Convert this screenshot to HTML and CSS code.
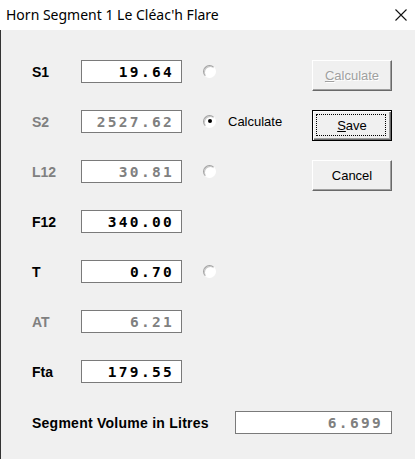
FILE: index.html
```html
<!DOCTYPE html>
<html>
<head>
<meta charset="utf-8">
<link rel="stylesheet" href="styles.css">
</head>
<body>
<div class="window">
  <div class="titlebar">
    <span class="title">Horn Segment 1 Le Cléac'h Flare</span>
    <svg class="close" width="12" height="12" viewBox="0 0 12 12"><path d="M0.5 0.5 L11.5 11.5 M11.5 0.5 L0.5 11.5" stroke="#111" stroke-width="1.1" fill="none"/></svg>
  </div>
  <div class="client">
    <div class="fields">
      <div class="row"><span class="lbl">S1</span><span class="box">19.64</span><span class="radio"></span></div>
      <div class="row"><span class="lbl dis">S2</span><span class="box dis">2527.62</span><span class="radio on"></span><span class="rlabel">Calculate</span></div>
      <div class="row"><span class="lbl dis">L12</span><span class="box dis">30.81</span><span class="radio"></span></div>
      <div class="row"><span class="lbl">F12</span><span class="box">340.00</span></div>
      <div class="row"><span class="lbl">T</span><span class="box">0.70</span><span class="radio"></span></div>
      <div class="row"><span class="lbl dis">AT</span><span class="box dis">6.21</span></div>
      <div class="row"><span class="lbl">Fta</span><span class="box">179.55</span></div>
      <div class="row vol"><span class="lbl wide">Segment Volume in Litres</span><span class="box volbox dis">6.699</span></div>
    </div>
    <div class="buttons">
      <div class="btn disabled"><span><u>C</u>alculate</span></div>
      <div class="btn default"><span><u>S</u>ave</span></div>
      <div class="btn"><span>Cancel</span></div>
    </div>
  </div>
</div>
</body>
</html>
```
FILE: styles.css
```css
html, body {
  margin: 0;
  padding: 0;
  background: #f0f0f0;
}
.window {
  width: 415px;
  height: 459px;
  display: flex;
  flex-direction: column;
  overflow: hidden;
}
.titlebar {
  height: 30px;
  background: #ffffff;
  display: flex;
  align-items: center;
  justify-content: space-between;
  padding: 0 8px 0 6px;
  box-sizing: border-box;
  flex: none;
}
.title {
  font-family: "Noto Sans", sans-serif;
  font-size: 14px;
  color: #000;
  line-height: 1;
  margin-top: -1px;
}
.close {
  display: block;
}
.client {
  flex: 1;
  display: flex;
  border-left: 1px solid #333333;
  padding: 30px 0 0 31px;
  box-sizing: border-box;
}
.fields {
  width: 280px;
  flex: none;
  display: flex;
  flex-direction: column;
  align-items: flex-start;
  gap: 27px;
}
.row {
  height: 23px;
  display: flex;
  align-items: center;
  flex: none;
}
.lbl {
  width: 49px;
  flex: none;
  white-space: nowrap;
  font-family: "Liberation Sans", Arial, sans-serif;
  font-weight: bold;
  font-size: 14px;
  color: #000;
}
.lbl.dis {
  color: #808080;
}
.lbl.wide {
  width: 203px;
  letter-spacing: 0.25px;
}
.box {
  box-sizing: border-box;
  flex: none;
  width: 101px;
  height: 23px;
  background: #ffffff;
  border: 1px solid #7a7a7a;
  display: flex;
  align-items: center;
  justify-content: flex-end;
  padding-right: 7px;
  font-family: "DejaVu Sans Mono", monospace;
  font-weight: bold;
  font-size: 14.5px;
  letter-spacing: 2.3px;
  color: #000;
}
.box.dis {
  color: #808080;
}
.volbox {
  width: 157px;
  padding-right: 8px;
}
.vol {
  margin-top: 1px;
  width: 360px;
}
.radio {
  box-sizing: border-box;
  flex: none;
  width: 13px;
  height: 13px;
  margin-left: 21px;
  border-radius: 50%;
  border: 1px solid;
  border-color: #a0a0a0 #ffffff #ffffff #a0a0a0;
  background: #ffffff;
  box-shadow: inset 1px 1px 0 #c8c8c8;
  display: flex;
  align-items: center;
  justify-content: center;
  margin-top: -1px;
}
.radio.on::after {
  content: "";
  width: 4px;
  height: 4px;
  border-radius: 50%;
  background: #000;
}
.rlabel {
  margin-left: 12px;
  font-family: "Liberation Sans", Arial, sans-serif;
  font-size: 13px;
  color: #000;
}
.buttons {
  display: flex;
  flex-direction: column;
  gap: 19px;
}
.btn {
  position: relative;
  box-sizing: border-box;
  width: 80px;
  height: 31px;
  background: #f0f0f0;
  border: 1px solid;
  border-color: #ffffff #696969 #696969 #ffffff;
  box-shadow: inset -1px -1px 0 #a0a0a0;
  display: flex;
  align-items: center;
  justify-content: center;
  font-family: "Liberation Sans", Arial, sans-serif;
  font-size: 13px;
  color: #000;
}
.btn.disabled {
  color: #a0a0a0;
  text-shadow: 1px 1px 0 #ffffff;
}
.btn.default {
  border-color: #000000;
  box-shadow: inset 1px 1px 0 #ffffff, inset -1px -1px 0 #696969, inset -2px -2px 0 #a0a0a0;
}
.btn.default::after {
  content: "";
  position: absolute;
  left: 3px;
  top: 3px;
  right: 5px;
  bottom: 4px;
  border: 1px dotted #000;
}
```
